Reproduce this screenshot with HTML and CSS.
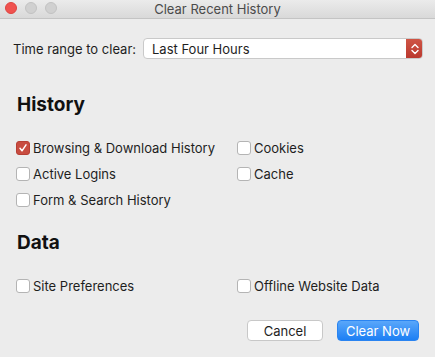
FILE: index.html
```html
<!DOCTYPE html>
<html>
<head>
<meta charset="utf-8">
<link rel="stylesheet" href="styles.css">
</head>
<body>
<div class="window">
  <div class="titlebar">
    <div class="lights">
      <span class="light red"></span>
      <span class="light grey"></span>
      <span class="light grey"></span>
    </div>
    <div class="title">Clear Recent History</div>
  </div>
  <div class="content">
    <div class="range">
      <span class="range-label">Time range to clear:</span>
      <div class="select">
        <span class="select-value">Last Four Hours</span>
        <span class="stepper">
          <svg width="10" height="14" viewBox="0 0 10 14"><path d="M2 5.5 L5 2.5 L8 5.5 M2 8.5 L5 11.5 L8 8.5" fill="none" stroke="#fff" stroke-width="1.4" stroke-linecap="round" stroke-linejoin="round"/></svg>
        </span>
      </div>
    </div>

    <h2 class="heading">History</h2>
    <div class="checks">
      <label class="check"><span class="box checked"><svg width="14" height="14" viewBox="0 0 14 14"><path d="M4 7.3 L6 9.8 L10 3.8" fill="none" stroke="#fff" stroke-width="1.5" stroke-linecap="round" stroke-linejoin="round"/></svg></span>Browsing &amp; Download History</label>
      <label class="check"><span class="box"></span>Cookies</label>
      <label class="check"><span class="box"></span>Active Logins</label>
      <label class="check"><span class="box"></span>Cache</label>
      <label class="check"><span class="box"></span>Form &amp; Search History</label>
    </div>

    <h2 class="heading data">Data</h2>
    <div class="checks data-checks">
      <label class="check"><span class="box"></span>Site Preferences</label>
      <label class="check"><span class="box"></span>Offline Website Data</label>
    </div>

    <div class="buttons">
      <button class="btn cancel">Cancel</button>
      <button class="btn primary">Clear Now</button>
    </div>
  </div>
</div>
</body>
</html>
```

FILE: styles.css
```css
html, body {
  margin: 0;
  padding: 0;
  background: #ececec;
}
body {
  font-family: "Inter", "Liberation Sans", sans-serif;
  font-size: 13px;
  color: #1e1e1e;
  width: 435px;
  height: 357px;
  overflow: hidden;
}
.window {
  display: flex;
  flex-direction: column;
}
.titlebar {
  height: 18px;
  position: relative;
  background: linear-gradient(#ebebeb, #d9d9d9);
  border-bottom: 1px solid #c4c4c4;
  display: flex;
  align-items: center;
  justify-content: center;
}
.lights {
  position: absolute;
  left: 5px;
  top: 2px;
  display: flex;
  gap: 8px;
}
.light {
  width: 12px;
  height: 12px;
  border-radius: 50%;
  box-sizing: border-box;
}
.light.red {
  background: #f0524f;
  border: 1px solid #de4440;
}
.light.grey {
  background: #d0d0d0;
  border: 1px solid #c2c2c2;
}
.title {
  color: #4b4b4b;
  font-size: 13px;
  line-height: 16px;
  margin-top: -1px;
}
.content {
  padding: 0 13px 0 13px;
  display: flex;
  flex-direction: column;
}
.range {
  display: flex;
  align-items: center;
  margin-top: 19px;
  height: 21px;
}
.range-label {
  width: 130px;
  flex: none;
}
.select {
  flex: 1;
  height: 21px;
  box-sizing: border-box;
  background: #fff;
  border: 1px solid #c9c9c9;
  border-radius: 4px;
  display: flex;
  align-items: center;
  overflow: hidden;
  margin-right: -1px;
}
.select-value {
  flex: 1;
  padding-left: 8px;
}
.stepper {
  width: 17px;
  height: 21px;
  background: linear-gradient(#d05646, #b9372d);
  display: flex;
  align-items: center;
  justify-content: center;
  margin-right: -1px;
}
.heading {
  font-size: 19px;
  font-weight: 700;
  margin: 35px 0 0 4px;
  line-height: 22px;
  color: #111;
}
.heading.data {
  margin-top: 22px;
}
.checks {
  display: grid;
  grid-template-columns: 221px auto;
  row-gap: 5px;
  margin-top: 21px;
  padding-left: 3px;
}
.checks.data-checks {
  margin-top: 21px;
}
.check {
  display: flex;
  align-items: center;
  height: 21px;
  gap: 3px;
}
.box {
  width: 14px;
  height: 14px;
  box-sizing: border-box;
  border: 1px solid #b4b4b4;
  border-radius: 3px;
  background: #fff;
  display: flex;
  flex: none;
}
.box.checked {
  background: #c84c40;
  border-color: #b73f34;
}
.box.checked svg {
  margin: -1px;
}
.buttons {
  display: flex;
  justify-content: flex-end;
  gap: 14px;
  margin-top: 24px;
  padding-right: 3px;
}
.btn {
  font-family: inherit;
  font-size: 13px;
  height: 21px;
  border-radius: 4px;
  box-sizing: border-box;
  padding: 0;
}
.cancel {
  width: 76px;
  background: #fff;
  border: 1px solid #c8c8c8;
  color: #1e1e1e;
}
.primary {
  width: 82px;
  background: linear-gradient(#5aa7fa, #1c7ff4);
  border: 1px solid #2a84f1;
  color: #fff;
}
```
